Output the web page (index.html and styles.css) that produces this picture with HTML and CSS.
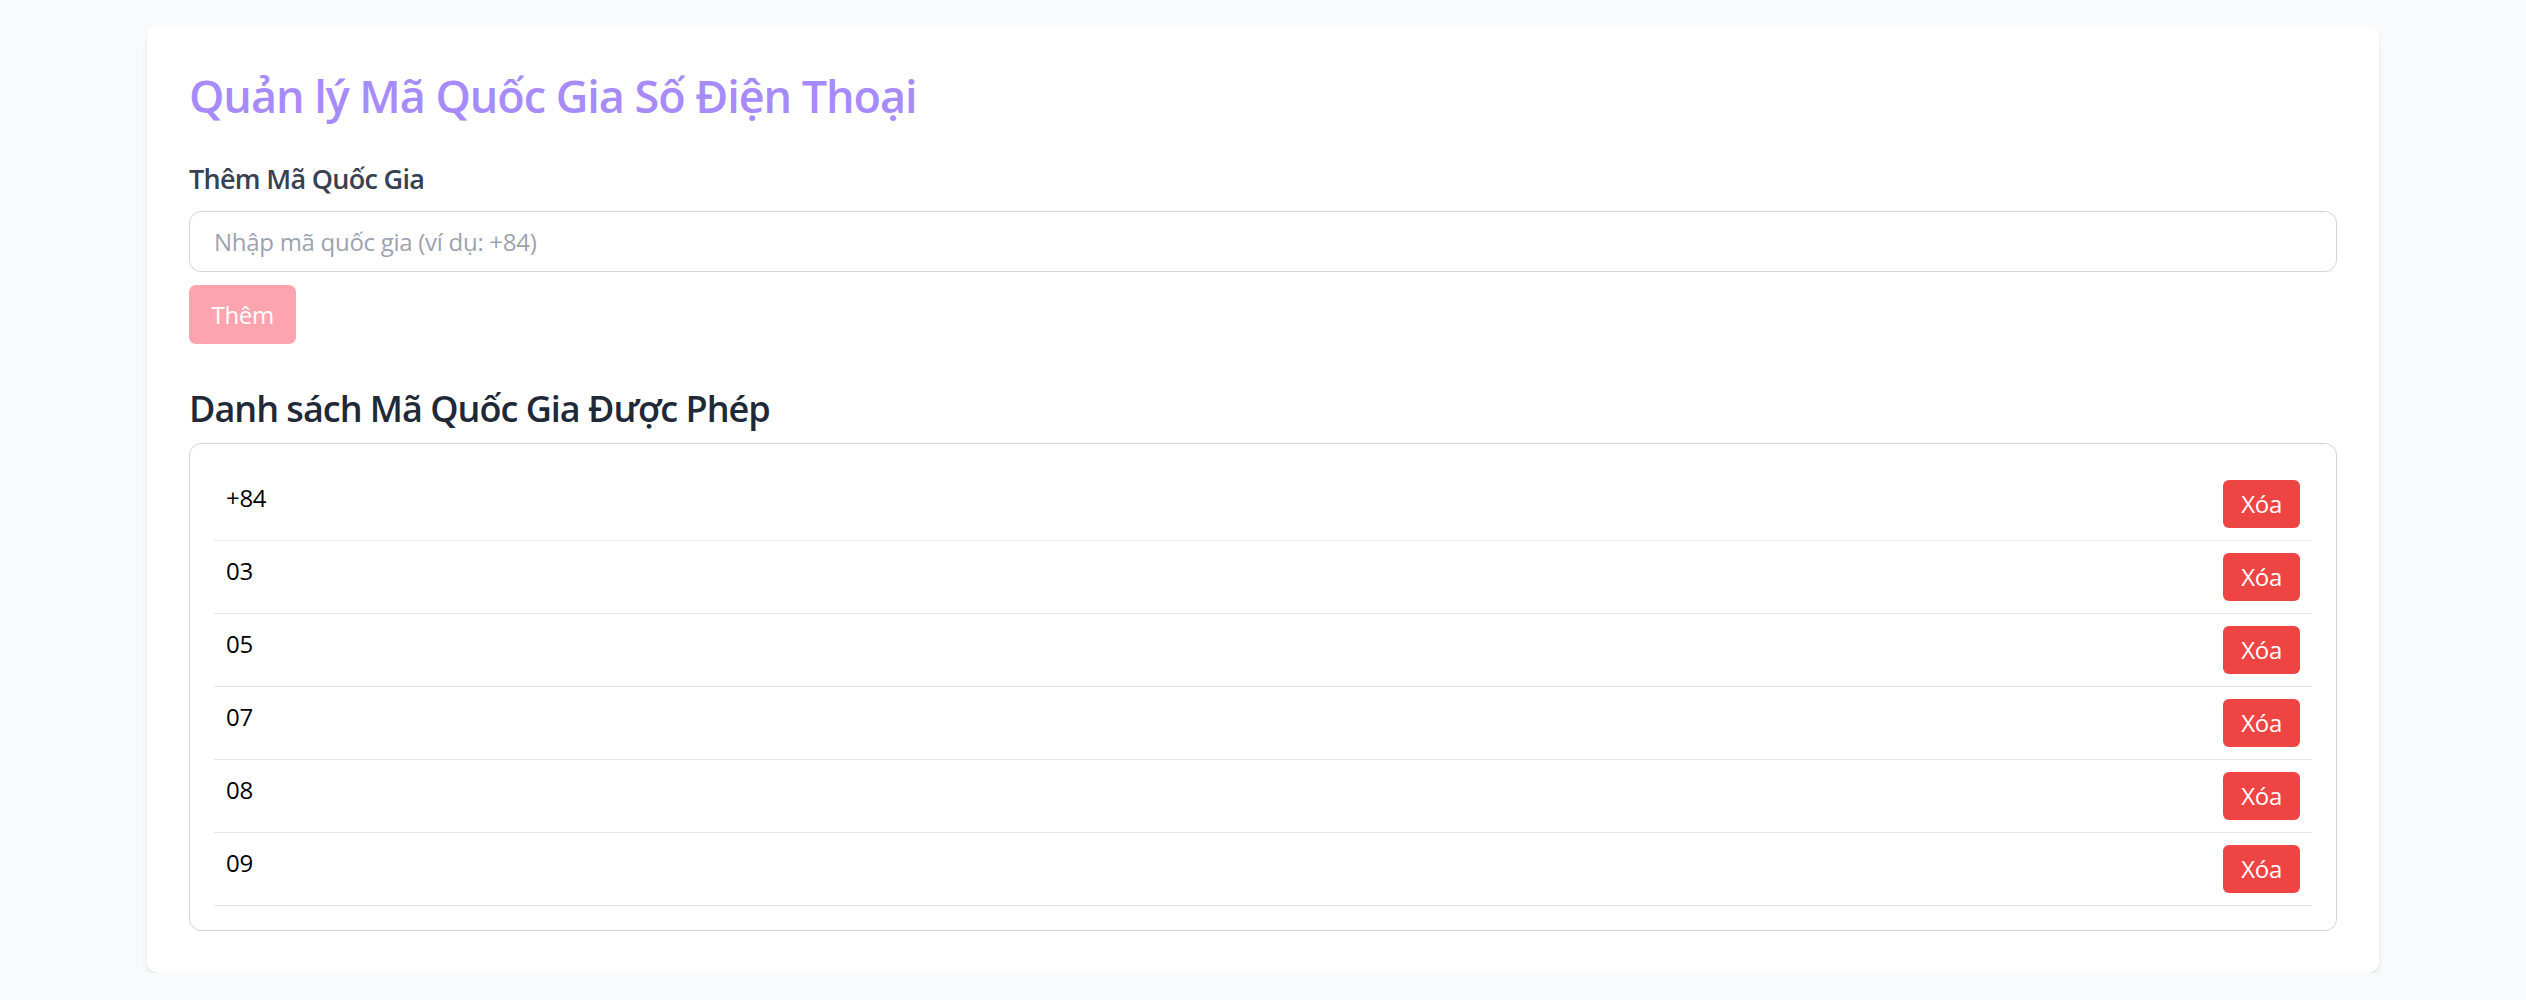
FILE: index.html
```html
<!DOCTYPE html>
<html lang="vi">
<head>
<meta charset="utf-8">
<title>Quản lý Mã Quốc Gia</title>
<link rel="stylesheet" href="styles.css">
</head>
<body>
<div class="page">
  <div class="card">
    <h1 class="title">Quản lý Mã Quốc Gia Số Điện Thoại</h1>
    <div class="add-section">
      <label class="label" for="code">Thêm Mã Quốc Gia</label>
      <input id="code" class="input" type="text" placeholder="Nhập mã quốc gia (ví dụ: +84)">
      <button class="add-btn" disabled>Thêm</button>
    </div>
    <h2 class="heading">Danh sách Mã Quốc Gia Được Phép</h2>
    <ul class="list">
      <li class="row"><span class="code">+84</span><button class="del-btn">Xóa</button></li>
      <li class="row"><span class="code">03</span><button class="del-btn">Xóa</button></li>
      <li class="row"><span class="code">05</span><button class="del-btn">Xóa</button></li>
      <li class="row"><span class="code">07</span><button class="del-btn">Xóa</button></li>
      <li class="row"><span class="code">08</span><button class="del-btn">Xóa</button></li>
      <li class="row"><span class="code">09</span><button class="del-btn">Xóa</button></li>
    </ul>
  </div>
</div>
</body>
</html>
```

FILE: styles.css
```css
* { box-sizing: border-box; }

html, body {
  margin: 0;
  padding: 0;
  background: #f9fafb;
  font-family: "Open Sans", "Noto Sans", sans-serif;
  letter-spacing: -0.32px;
}

.page {
  padding: 25px 0 0;
}

.card {
  width: 2232px;
  margin: 0 auto;
  background: #ffffff;
  border-radius: 12px;
  padding: 44px 42px 42px;
  box-shadow: 0 6px 10px -2px rgba(0, 0, 0, 0.09), 0 3px 6px -3px rgba(0, 0, 0, 0.08);
}

.title {
  margin: 0 0 35px;
  font-size: 45px;
  line-height: 54px;
  font-weight: 600;
  color: #a78bfa;
  letter-spacing: -1.05px;
}

.add-section {
  display: flex;
  flex-direction: column;
  align-items: flex-start;
}

.label {
  display: block;
  font-size: 27px;
  line-height: 42px;
  font-weight: 600;
  color: #374151;
  margin-bottom: 11px;
  letter-spacing: -0.7px;
}

.input {
  width: 100%;
  height: 61px;
  border: 1px solid #d1d5db;
  border-radius: 12px;
  padding: 0 24px;
  font-family: inherit;
  letter-spacing: -0.28px;
  font-size: 24px;
  color: #111827;
  background: #fff;
  outline: none;
}

.input::placeholder {
  color: #9ca3af;
}

.add-btn {
  margin-top: 13px;
  height: 59px;
  padding: 0 22.5px;
  border: none;
  border-radius: 7px;
  background: #fda4af;
  color: #ffffff;
  font-family: inherit;
  letter-spacing: inherit;
  font-size: 24px;
  line-height: 36px;
}

.heading {
  margin: 41px 0 10px;
  font-size: 36px;
  line-height: 48px;
  font-weight: 600;
  color: #1f2937;
  letter-spacing: -1px;
}

.list {
  list-style: none;
  margin: 0;
  padding: 24px;
  border: 1px solid #d1d5db;
  border-radius: 12px;
}

.row {
  display: flex;
  justify-content: space-between;
  align-items: flex-start;
  padding: 12px 12px;
  border-bottom: 1px solid #e5e7eb;
}

.code {
  font-size: 24px;
  line-height: 36px;
  color: #000000;
}

.del-btn {
  height: 48px;
  padding: 0 18px;
  border: none;
  border-radius: 6px;
  background: #ef4444;
  color: #ffffff;
  font-family: inherit;
  letter-spacing: inherit;
  font-size: 24px;
  line-height: 36px;
}
```
